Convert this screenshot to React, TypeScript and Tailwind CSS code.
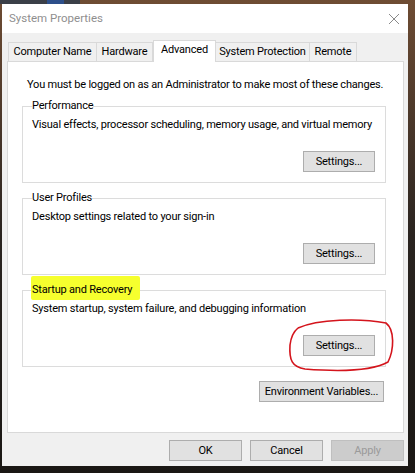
import React from "react";

const font = { fontFamily: "Roboto, 'Liberation Sans', sans-serif" };
const txt = "text-[11px] tracking-[-0.2px] whitespace-nowrap";

function Btn({ children, w, disabled }: { children: React.ReactNode; w: string; disabled?: boolean }) {
  return (
    <div
      className={
        "h-[21px] flex items-center justify-center border leading-none text-[11px] tracking-[-0.2px] whitespace-nowrap " +
        w +
        (disabled
          ? " bg-[#cccccc] border-[#bfbfbf] text-[#9a9a9a]"
          : " bg-[#e1e1e1] border-[#adadad] text-black")
      }
    >
      {children}
    </div>
  );
}

function Group({
  label,
  desc,
  highlight,
  className,
}: {
  label: string;
  desc: string;
  highlight?: boolean;
  className?: string;
}) {
  return (
    <fieldset className={"border border-[#dcdcdc] mx-0 px-[9px] pb-[10px] " + (className || "")}>
      <legend className={"px-0 leading-[16px] text-black " + txt}>
        <span className="relative inline-block">
          {highlight && (
            <span className="absolute left-[-1px] right-[-8px] top-[-6px] bottom-[-2px] bg-[#f6ff2e] rounded-[2px]" />
          )}
          <span className="relative">{label}</span>
        </span>
      </legend>
      <div className={"pt-[3px] leading-[16px] text-black " + txt}>{desc}</div>
      <div className="flex justify-end pt-[18px] pr-[1px]">
        <Btn w="w-[72px]">Settings...</Btn>
      </div>
    </fieldset>
  );
}

export default function App() {
  const tabs = [
    { t: "Computer Name", w: "w-[89px]" },
    { t: "Hardware", w: "w-[57px]" },
    { t: "Advanced", w: "w-[63px]", sel: true },
    { t: "System Protection", w: "w-[95px]" },
    { t: "Remote", w: "w-[48px]" },
  ];
  return (
    <div
      className="relative w-[415px] h-[473px] overflow-hidden bg-gradient-to-b from-[#6e4c33] via-[#2a2420] to-[#1a1714]"
      style={font}
    >
      <div className="absolute left-0 top-0 w-[80px] h-[4px] bg-[#3a3f48]" />
      <div className="absolute left-[47px] top-0 w-[17px] h-[4px] bg-[#2d4f8a]" />
      <div className="ml-[2px] mt-[4px] w-[406px] h-[462px] flex flex-col bg-[#f0f0f0]">
        {/* title bar */}
        <div className="h-[29px] bg-white flex items-center justify-between pl-[7px] pr-[7px]">
          <span className="text-[11.5px] text-[#8f8f8f] whitespace-nowrap">System Properties</span>
          <svg width="12" height="12" viewBox="0 0 12 12" className="mr-[1px]">
            <path d="M1 1 L11 11 M11 1 L1 11" stroke="#8a8a8a" strokeWidth="1" />
          </svg>
        </div>
        {/* tabs */}
        <div className="flex items-end pl-[6px] pt-[7px] h-[28px] relative z-10">
          {tabs.map((tab) =>
            tab.sel ? (
              <div
                key={tab.t}
                className={
                  tab.w +
                  " h-[22px] -mb-[1px] bg-white border border-b-0 border-[#d9d9d9] flex items-center justify-center text-black pb-[3px] " +
                  txt
                }
              >
                {tab.t}
              </div>
            ) : (
              <div
                key={tab.t}
                className={
                  tab.w +
                  " h-[19px] bg-[#f0f0f0] border border-b-0 border-[#d9d9d9] -ml-[1px] first:ml-0 flex items-center justify-center text-black " +
                  txt
                }
              >
                {tab.t}
              </div>
            )
          )}
        </div>
        {/* panel */}
        <div className="ml-[5px] w-[397px] h-[372px] bg-white border border-[#d9d9d9] pl-[14px] pr-[17px] pt-[15px] flex flex-col">
          <div className={"pl-[5px] leading-[16px] text-black " + txt}>
            You must be logged on as an Administrator to make most of these changes.
          </div>
          <Group
            className="mt-[5px]"
            label="Performance"
            desc="Visual effects, processor scheduling, memory usage, and virtual memory"
          />
          <Group className="mt-[7px]" label="User Profiles" desc="Desktop settings related to your sign-in" />
          <Group
            className="mt-[7px]"
            label="Startup and Recovery"
            desc="System startup, system failure, and debugging information"
            highlight
          />
          <div className="flex justify-end mt-[14px] pr-[2px]">
            <Btn w="w-[125px]">Environment Variables...</Btn>
          </div>
        </div>
        {/* footer */}
        <div className="flex justify-end gap-[8px] pr-[4px] mt-[7px]">
          <Btn w="w-[73px]">OK</Btn>
          <Btn w="w-[73px]">Cancel</Btn>
          <Btn w="w-[73px]" disabled>
            Apply
          </Btn>
        </div>
      </div>
      {/* red hand-drawn circle annotation */}
      <svg className="absolute left-0 top-0 pointer-events-none" width="415" height="473" viewBox="0 0 415 473">
        <path
          d="M298 328 C318 319, 360 318, 386 323 C395 330, 394 350, 388 362 C370 372, 330 371, 305 369 C292 367, 289 360, 290 345 C291 337, 293 332, 298 328"
          fill="none"
          stroke="#d4141c"
          strokeWidth="1.6"
        />
      </svg>
    </div>
  );
}
